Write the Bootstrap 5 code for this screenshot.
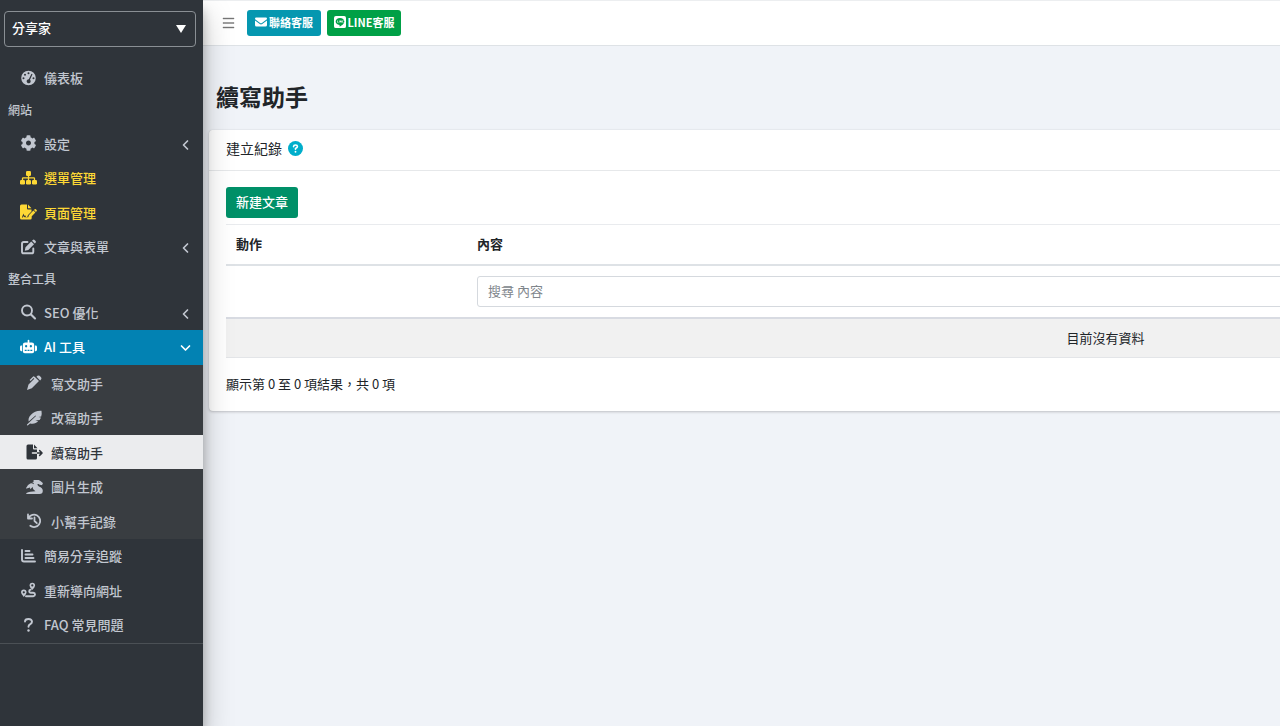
<!DOCTYPE html>
<html lang="zh-Hant">
<head>
<meta charset="utf-8">
<meta name="viewport" content="width=device-width, initial-scale=1">
<title>續寫助手</title>
<link href="https://cdn.jsdelivr.net/npm/bootstrap@5.3.0/dist/css/bootstrap.min.css" rel="stylesheet">
<style>
body { font-family: "Noto Sans CJK TC", sans-serif; font-size: 13px; line-height: 1.5; color: #212529; background: #f0f3f8; }
.app-shell { min-height: 100vh; overflow: hidden; }
.side { width: 203px; background: #2f343a; color: #c2c7d0; box-shadow: 0 14px 28px rgba(0,0,0,.25), 0 10px 10px rgba(0,0,0,.22); z-index: 2; padding-top: 11px; font-weight: 500; }
.site-picker { padding: 0 7px 0 4px; }
.site-select { appearance: none; height: 36px; border: 1px solid #8a8f94; border-radius: 4px; padding: 0 7px 2px; color: #fff; font-size: 13px; font-weight: 500; background: #2f343a url("data:image/svg+xml,%3Csvg xmlns='http://www.w3.org/2000/svg' viewBox='0 0 10 8'%3E%3Cpath fill='%23fff' d='M0 0h10L5 8z'/%3E%3C/svg%3E") no-repeat right 9px center / 10px 8px; }
.menu { margin-top: 14px; border-bottom: 1px solid #4b5055; }
.menu .nav-link { display: flex; align-items: center; padding: 7px 12px 8px 20px; color: #c2c7d0; gap: 7px; }
.menu .nav-link svg { width: 17px; height: 16px; }
.menu .nav-link.hot { color: #fdd835; }
.menu .nav-link.open { background: #0282b3; color: #fff; }
.menu .nav-link .arrow { width: 11px; height: 12px; margin: 3px 0 0 auto; }
.menu-title { padding: 5px 8px 8px; font-size: 12px; }
.submenu { background: #393d41; padding: 1px 0; }
.menu .submenu .nav-link { padding: 8px 12px 7px 26px; gap: 8px; }
.menu .submenu .nav-link.active { background: #ebecee; color: #2f343a; }
svg { fill: currentColor; flex: none; }
.ln { fill: none; stroke: currentColor; stroke-linecap: round; stroke-linejoin: round; }
.content-col { min-width: 0; }
.topbar { height: 46px; border-bottom: 1px solid #dee2e6; border-top: 1px solid #eceef0; padding-left: 19px; gap: 12px; background: #fff; }
.menu-toggle { width: 13px; color: #777; }
.btn-top { height: 26px; min-width: 74px; padding: 0 0 2px; font-size: 11px; font-weight: 700; line-height: 24px; border-radius: 3px; display: flex; align-items: center; justify-content: center; gap: 2px; }
.btn-top svg { width: 12px; height: 12px; }
.btn-mail, .btn-mail:hover { background: #0597b0; color: #fff; }
.btn-line, .btn-line:hover { background: #00a046; color: #fff; }
.page-title { font-size: 23px; font-weight: 700; line-height: 36px; margin: 32px 0 16px 13px; }
/* the record list is wider than the window and runs past its right edge */
.record-card { min-width: 1792px; margin-left: 6px; border: 0; border-radius: 4px; box-shadow: 0 0 1px rgba(0,0,0,.125), 0 1px 3px rgba(0,0,0,.2); }
.record-card .card-header { background: #fff; border-bottom: 1px solid #e6e8ea; padding: 6px 17px 9px; font-size: 14px; line-height: 25px; gap: 6px; }
.record-card .card-body { padding: 16px 16px 17px 17px; }
.help { width: 15px; height: 15px; color: #00aecb; }
.btn-create, .btn-create:hover { background: #009068; color: #fff; font-size: 13px; font-weight: 500; height: 31px; padding: 0 10px 2px; border-radius: 3px; }
.record-table { margin: 6px 0 16px; --bs-table-color: #212529; border-top: 1px solid #e9ebee; table-layout: fixed; }
.record-table th, .record-table td { padding: 9px 10px 10px; border-bottom: 0; }
.record-table th { font-weight: 700; border-bottom: 2px solid #dee2e6; }
.record-table .filters td { padding-top: 10px; border-bottom: 2px solid #d8dbe2; }
.record-table .empty td { background: #f1f1f1; border-bottom: 1px solid #e3e5e8; text-align: center; }
.record-table .first-col { width: 241px; }
.search-box { height: 31px; font-size: 13px; padding: 0 10px 1px; border-color: #d5d9de; border-radius: 3px; }
.search-box::placeholder { color: #80868c; }
</style>
</head>
<body>
<div class="app-shell d-flex">
<aside class="side flex-shrink-0">
  <div class="site-picker"><select class="site-select w-100" aria-label="網站"><option>分享家</option></select></div>
  <ul class="menu nav flex-column flex-nowrap">
    <li><a class="nav-link" href="#"><svg viewBox="0 0 16 16"><path fill-rule="evenodd" d="M8 .7a7.3 7.3 0 1 0 0 14.600A7.300 7.300 0 0 0 8 .7zM8 2.300a1 1 0 1 1 0 2 1 1 0 0 1 0-2zM4.500 3.700a1 1 0 1 1 0 2 1 1 0 0 1 0-2zM3 7.200a1 1 0 1 1 0 2 1 1 0 0 1 0-2zM13 7.200a1 1 0 1 1 0 2 1 1 0 0 1 0-2zM11 3.800l1 .4-2.500 5.600a2 2 0 1 1-1.200-.5z"/></svg>儀表板</a></li>
    <li class="menu-title">網站</li>
    <li><a class="nav-link" href="#"><svg viewBox="0 0 512 512"><path d="M487.400 315.700l-42.600-24.600c4.300-23.200 4.300-47 0-70.200l42.600-24.600c4.900-2.800 7.100-8.600 5.500-14-11.100-35.600-30-67.800-54.700-94.600-3.800-4.100-10-5.100-14.800-2.300L380.800 110c-17.900-15.400-38.500-27.300-60.800-35.100V25.800c0-5.600-3.900-10.500-9.400-11.700-36.700-8.200-74.300-7.800-109.200 0-5.500 1.200-9.400 6.100-9.400 11.700V75c-22.200 7.900-42.800 19.800-60.800 35.100L88.700 85.500c-4.900-2.800-11-1.900-14.800 2.300-24.700 26.700-43.600 58.900-54.700 94.600-1.700 5.400.6 11.200 5.500 14L67.300 221c-4.300 23.200-4.300 47 0 70.200l-42.600 24.600c-4.900 2.800-7.100 8.600-5.500 14 11.100 35.600 30 67.800 54.700 94.600 3.800 4.100 10 5.100 14.800 2.300l42.600-24.600c17.900 15.400 38.500 27.300 60.800 35.100v49.200c0 5.600 3.900 10.500 9.400 11.700 36.700 8.200 74.300 7.800 109.200 0 5.500-1.200 9.400-6.100 9.400-11.700v-49.200c22.200-7.900 42.800-19.800 60.800-35.100l42.600 24.600c4.900 2.800 11 1.900 14.800-2.300 24.700-26.700 43.600-58.900 54.700-94.600 1.500-5.500-.7-11.300-5.600-14.100zM256 336c-44.100 0-80-35.900-80-80s35.900-80 80-80 80 35.900 80 80-35.900 80-80 80z"/></svg>設定<svg class="arrow" viewBox="0 0 11 12"><path class="ln" stroke-width="1.700" d="M7.500 2L3.500 6l4 4"/></svg></a></li>
    <li><a class="nav-link hot" href="#"><svg viewBox="0 0 17 16"><rect x="6" y="1" width="5" height="5" rx="1.200"/><rect x="0" y="10" width="5" height="4.500" rx="1.200"/><rect x="6" y="10" width="5" height="4.500" rx="1.200"/><rect x="12" y="10" width="5" height="4.500" rx="1.200"/><path class="ln" stroke-width="1.300" d="M8.500 5v6M2.500 11V8.500q0-.7.700-.7h10.600q.7 0 .7.700V11"/></svg>選單管理</a></li>
    <li><a class="nav-link hot" href="#"><svg viewBox="0 0 17 16"><path d="M1.500.5H7V4.500q0 1 1 1h3.500v2L8 11l-.8 2H6l-.8-1.700-1 .5-.8-2.300-1.500 4h1l.7-1.500.9 1.200h5.200l2-.7V14q0 1.500-1.500 1.500h-8.500Q0 15.500 0 14V2Q0 .5 1.500.5zM8 .5l3.500 3.800H8zM8.800 11.200l4.600-4.600 2 2-4.600 4.600-2.600.6zM14 6l.7-.7q.6-.5 1.200 0l.7.700q.6.600 0 1.200l-.7.700z"/></svg>頁面管理</a></li>
    <li><a class="nav-link" href="#"><svg viewBox="0 0 17 16"><path class="ln" stroke-width="1.900" d="M7.500 3H3.700Q2 3 2 4.700v8Q2 14.300 3.700 14.300h8q1.600 0 1.600-1.600V9.500"/><path d="M5.500 8.200l5.700-5.700 2.800 2.800-5.700 5.700-3.500.7zM12 1.700l.8-.8q.9-.7 1.700 0l1.100 1.100q.7.800 0 1.700l-.8.800z"/></svg>文章與表單<svg class="arrow" viewBox="0 0 11 12"><path class="ln" stroke-width="1.700" d="M7.500 2L3.500 6l4 4"/></svg></a></li>
    <li class="menu-title">整合工具</li>
    <li><a class="nav-link" href="#"><svg viewBox="0 0 17 16"><circle class="ln" stroke-width="1.900" cx="7" cy="6.500" r="5"/><path class="ln" stroke-width="2.100" d="M11 10.500l4 4"/></svg>SEO 優化<svg class="arrow" viewBox="0 0 11 12"><path class="ln" stroke-width="1.700" d="M7.500 2L3.500 6l4 4"/></svg></a></li>
    <li><a class="nav-link open" href="#"><svg viewBox="0 0 18 16"><path fill-rule="evenodd" d="M8.100 1.200a.9.9 0 0 1 1.800 0v2h2.600Q15 3.200 15 5.500v7q0 2-2 2H5q-2 0-2-2v-7Q3 3.200 5.500 3.200h2.600zM6.500 6a1.200 1.200 0 1 0 0 2.400 1.200 1.200 0 0 0 0-2.400zM11.500 6a1.200 1.200 0 1 0 0 2.400 1.200 1.200 0 0 0 0-2.400zM5 11v1.200h2V11zM8 11v1.200h2V11zM11 11v1.200h2V11zM2.200 6.500v6H1.500Q0 12.500 0 11V8q0-1.500 1.500-1.500zM15.800 6.500v6h.7q1.500 0 1.500-1.500V8q0-1.500-1.500-1.500z"/></svg>AI 工具<svg class="arrow" viewBox="0 0 11 12"><path class="ln" stroke-width="1.700" d="M1.500 4l4 4 4-4"/></svg></a>
      <ul class="submenu list-unstyled">
        <li><a class="nav-link" href="#"><svg viewBox="0 0 17 16"><path d="M1 15l1.500-5.500 5.800-5.800-.7-.7-3 3-1-1 3.300-3.300q.8-.7 1.600 0l.9.800 3.600 3.600-7.200 7.200zM10.500 1.700l.9-.9q1.100-.8 2.200 0l1.400 1.400q1 1.100 0 2.300l-.9.900z"/></svg>寫文助手</a></li>
        <li><a class="nav-link" href="#"><svg viewBox="0 0 17 16"><path d="M15.500.8C11 .5 7.800 2 5 4.700 2.500 7 2.300 9.500 2.700 11.500L9.500 5.500l.5.600L1 14.500q-.3.800.4 1 .6 0 .9-.4l1.800-1.700c3.400.8 6.300-.2 8-2.100l-2.700-.7 4.200-.5q1-1.400 1.300-2.600l-2.400-.5 2.700-.5Q16 3.500 15.500.8z"/></svg>改寫助手</a></li>
        <li><a class="nav-link active" href="#" aria-current="page"><svg viewBox="0 0 17 16"><path d="M2 .5h5V4.500q0 1 1 1h3V8.200H6.500q-.8 0-.8.800t.8.800H11V14q0 1.500-1.500 1.500H2Q.5 15.500.5 14V2Q.5.5 2 .5zM8 .5l3.500 3.800H8zM11 8.200h3l-1-1.100q-.4-.6.100-1.100t1 0l2.500 2.500q.4.500 0 1L14.100 12q-.5.400-1 0t-.1-1.100l1-1.100h-3z"/></svg>續寫助手</a></li>
        <li><a class="nav-link" href="#"><svg viewBox="0 0 18 16"><path d="M8.500.6h5l1.800 1 2.200 1.900q.5.600.2 1.200l-.6 1q-.3.400-.9.300l-1.700-.4-1.200-.9h-1.100q-.3 1.700 1.500 2.700 4.100 1.300 4.100 4.600 0 3.400-3.500 3.500H.7q-.9-.3-.2-1.100c2.300-1.400 5.500-1.900 9.500-2L7.700 10.300Q6.900 9 7.300 7.700L4.500 10.500 4.200 8.500.7 9.600q-.8.100-.6-.6Q2 5.300 4.500 4.300q1.800-.7 3.600.9l.1-1.500-1.200-.5q-.4-.4.100-.6l1.400-.6-.7-.8q-.2-.4.700-.6z"/></svg>圖片生成</a></li>
        <li><a class="nav-link" href="#"><svg viewBox="0 0 17 16"><path class="ln" stroke-width="1.800" d="M2.500 5A6.200 6.200 0 1 1 4.300 12.800M8.500 4.500V8l2.300 2.200M2 1.500v4h4"/></svg>小幫手記錄</a></li>
      </ul></li>
    <li><a class="nav-link" href="#"><svg viewBox="0 0 17 16"><path class="ln" stroke-width="1.900" d="M2 2v9.500Q2 13.500 4 13.500h11M5.500 3h4M5.500 6.500h7M5.500 10h8"/></svg>簡易分享追蹤</a></li>
    <li><a class="nav-link" href="#"><svg viewBox="0 0 17 16"><path fill-rule="evenodd" d="M3.800 7.500Q1 7.800 1 10.300q0 1.800 2.800 4.700 2.800-2.900 2.800-4.700 0-2.500-2.800-2.800zM3.800 9.200a1.100 1.100 0 1 1 0 2.200 1.100 1.100 0 0 1 0-2.200zM12.300.7Q9.500 1 9.500 3.500q0 1.700 2.800 4.500 2.800-2.800 2.800-4.500 0-2.500-2.800-2.800zM12.300 2.300a1.100 1.100 0 1 1 0 2.200 1.100 1.100 0 0 1 0-2.200z"/><path class="ln" stroke-width="1.900" d="M6 14.200h7.200q1.800-.2 1.800-1.700t-1.800-1.700h-2.500q-1.500-.2-1.500-1.600T10.700 7.600"/></svg>重新導向網址</a></li>
    <li><a class="nav-link" href="#"><svg viewBox="0 0 17 16"><path class="ln" stroke-width="1.900" d="M5 4.500Q5 2 8.500 2T12 4.800q0 1.500-2 2.500-1.500.8-1.500 2.500"/><circle cx="8.500" cy="13.500" r="1.200"/></svg>FAQ 常見問題</a></li>
  </ul>
</aside>
<div class="content-col flex-grow-1">
  <header class="topbar d-flex align-items-center">
    <button class="menu-toggle btn p-0 border-0 d-flex" type="button" aria-label="選單"><svg width="13" height="12" viewBox="0 0 13 12"><path d="M1 1h11v1H1zM1 5.500h11v1H1zM1 10h11v1H1z" stroke="currentColor" stroke-width=".4"/></svg></button>
    <nav class="d-flex" style="gap:6px">
    <a class="btn btn-top btn-mail border-0" href="#"><svg viewBox="0 0 16 16"><path d="M1.500 2h13Q16 2 16 3.500q0 .8-.6 1.200L8.800 9.500q-.8.500-1.600 0L.6 4.700Q0 4.300 0 3.500 0 2 1.500 2zM0 6l6.400 4.800q1.600 1 3.200 0L16 6v6q0 2-2 2H2q-2 0-2-2z"/></svg>聯絡客服</a>
    <a class="btn btn-top btn-line border-0" href="#"><svg viewBox="0 0 16 16"><path fill-rule="evenodd" d="M2.500 0h11Q16 0 16 2.500v11q0 2.500-2.500 2.500h-11Q0 16 0 13.500v-11Q0 0 2.500 0zM8 2.500c-3.300 0-5.800 2.100-5.800 4.800 0 2.500 2 4.300 4.900 4.700q.6.200.3 1.600 0 .6.600.3c2.500-1.400 5.800-3.700 5.800-6.600 0-2.700-2.500-4.800-5.800-4.800zM4.200 6h.8v2h1v.7H4.200zM6.600 6h.8v2.700h-.8zM8 6h.7l1 1.300V6h.7v2.700h-.7l-1-1.300v1.300H8zM11 6h1.700v.7h-.9v1.300h.9v.7H11z"/></svg>LINE客服</a>
    </nav>
  </header>
  <main>
    <h1 class="page-title">續寫助手</h1>
    <section class="card record-card">
      <div class="card-header d-flex align-items-center">建立紀錄 <svg class="help" viewBox="0 0 16 16"><circle cx="8" cy="8" r="8"/><path fill="none" stroke="#fff" stroke-width="1.700" stroke-linecap="round" d="M5.900 6Q6 4.200 8 4.200t2.100 1.700Q10.100 7 8 8v.8"/><circle cx="8" cy="11.500" r="1" fill="#fff"/></svg></div>
      <div class="card-body">
        <button class="btn btn-create border-0" type="button">新建文章</button>
        <table class="table record-table">
          <thead><tr><th class="first-col" scope="col">動作</th><th scope="col">內容</th></tr></thead>
          <tbody>
            <tr class="filters"><td></td><td><input class="form-control search-box" type="text" placeholder="搜尋 內容" aria-label="搜尋 內容"></td></tr>
            <tr class="empty"><td colspan="2">目前沒有資料</td></tr>
          </tbody>
        </table>
        <div>顯示第 0 至 0 項結果，共 0 項</div>
      </div>
    </section>
  </main>
</div>
</div>
<script src="https://cdn.jsdelivr.net/npm/bootstrap@5.3.0/dist/js/bootstrap.bundle.min.js"></script>
</body>
</html>
